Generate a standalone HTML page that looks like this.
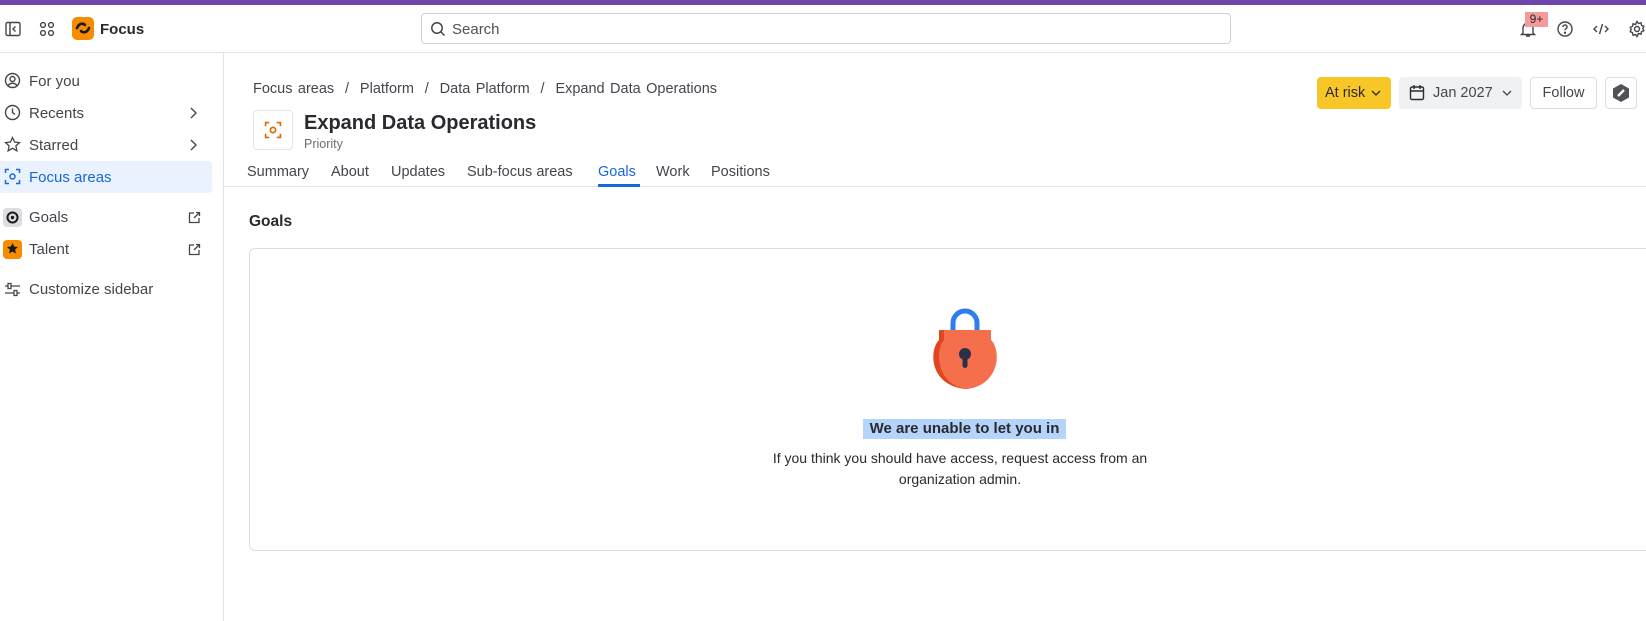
<!DOCTYPE html>
<html><head><meta charset="utf-8"><style>
*{box-sizing:border-box;margin:0;padding:0}
body{width:1646px;height:621px;overflow:hidden;background:#fff;font-family:"Liberation Sans",sans-serif;color:#292a2e;position:relative;line-height:1.42}
.a{position:absolute;white-space:nowrap}
svg{display:block}
.si{position:absolute;left:6px;font-size:15px;color:#44464d}
</style></head><body>
<div class="a" style="left:0;top:0;width:1646px;height:5px;background:#6e45a8"></div>
<div class="a" style="left:0;top:52px;width:1646px;height:1px;background:#e2e3e6"></div>
<div class="a" style="left:223px;top:53px;width:1px;height:568px;background:#e2e3e6"></div>
<svg class="a" style="left:5px;top:21px" width="16" height="16" viewBox="0 0 16 16" fill="none" stroke="#44464d" stroke-width="1.4"><rect x="1" y="1.5" width="14" height="13" rx="1.5"/><path d="M5 1.5v13M10.5 5.5L8 8l2.5 2.5"/></svg>
<svg class="a" style="left:39px;top:21px" width="16" height="16" viewBox="0 0 16 16" fill="none" stroke="#44464d" stroke-width="1.4"><circle cx="4" cy="4" r="2.4"/><circle cx="12" cy="4" r="2.4"/><circle cx="4" cy="12" r="2.4"/><circle cx="12" cy="12" r="2.4"/></svg>
<div class="a" style="left:72px;top:17px;width:22px;height:23px;border-radius:5px;background:#f78c00"></div>
<svg class="a" style="left:74px;top:19px" width="18" height="18" viewBox="0 0 18 18" fill="none" stroke="#1a1a1a" stroke-width="2.6" stroke-linecap="round"><path d="M3 9c2-5 6-5 8-3M15 9c-2 5-6 5-8 3"/></svg>
<div class="a" style="left:100px;top:19px;font-size:15px;font-weight:bold;color:#292a2e">Focus</div>
<div class="a" style="left:421px;top:13px;width:810px;height:31px;border:1px solid #cfd1d6;border-radius:4px"></div>
<svg class="a" style="left:430px;top:21px" width="16" height="16" viewBox="0 0 16 16" fill="none" stroke="#44464d" stroke-width="1.5"><circle cx="7" cy="7" r="5.2"/><path d="M11 11l3.5 3.5"/></svg>
<div class="a" style="left:452px;top:19px;font-size:15px;color:#505258">Search</div>
<svg class="a" style="left:1519px;top:20px" width="18" height="18" viewBox="0 0 18 18" fill="none" stroke="#44464d" stroke-width="1.4"><path d="M4 13V8a5 5 0 0110 0v5l1.5 1.5h-13zM7 16h4"/></svg>
<div class="a" style="left:1525px;top:12px;width:23px;height:15px;background:#f59a9a;font-size:12px;text-align:center;line-height:15px;color:#292a2e">9+</div>
<svg class="a" style="left:1556px;top:20px" width="18" height="18" viewBox="0 0 18 18" fill="none" stroke="#44464d" stroke-width="1.4"><circle cx="9" cy="9" r="7"/><path d="M7 7a2 2 0 113 1.7c-.7.4-1 .8-1 1.6"/><circle cx="9" cy="12.8" r=".5" fill="#44464d"/></svg>
<svg class="a" style="left:1592px;top:20px" width="18" height="18" viewBox="0 0 18 18" fill="none" stroke="#44464d" stroke-width="1.4"><path d="M5 6L2 9l3 3M13 6l3 3-3 3M10.5 4l-3 10"/></svg>
<svg class="a" style="left:1628px;top:20px" width="18" height="18" viewBox="0 0 18 18" fill="none" stroke="#44464d" stroke-width="1.4"><circle cx="9" cy="9" r="2.5"/><path d="M9 1.5l1.5 2 2.5-.7.5 2.5 2.3 1-1 2.2 1 2.2-2.3 1-.5 2.5-2.5-.7L9 16.5l-1.5-2-2.5.7-.5-2.5-2.3-1 1-2.2-1-2.2 2.3-1 .5-2.5 2.5.7z"/></svg>
<div class="a" style="left:0;top:161px;width:212px;height:32px;background:#e9f2fe;border-radius:0 4px 4px 0"></div>
<svg class="a" style="left:4px;top:72px" width="17" height="17" viewBox="0 0 17 17" fill="none" stroke="#44464d" stroke-width="1.4"><circle cx="8.5" cy="8.5" r="7"/><circle cx="8.5" cy="7" r="2.5"/><path d="M4 13.5c2.5-3 6.5-3 9 0"/></svg>
<div class="si" style="left:29px;top:71px">For you</div>
<svg class="a" style="left:4px;top:104px" width="17" height="17" viewBox="0 0 17 17" fill="none" stroke="#44464d" stroke-width="1.4"><circle cx="8.5" cy="8.5" r="7"/><path d="M8.5 4.5v4l2.5 2"/></svg>
<div class="si" style="left:29px;top:103px">Recents</div>
<svg class="a" style="left:4px;top:136px" width="17" height="17" viewBox="0 0 17 17" fill="none" stroke="#44464d" stroke-width="1.3"><path d="M8.5 1.5l2.1 4.5 4.9.6-3.6 3.3 1 4.9-4.4-2.5-4.4 2.5 1-4.9L1.5 6.6l4.9-.6z"/></svg>
<div class="si" style="left:29px;top:135px">Starred</div>
<svg class="a" style="left:189px;top:107px" width="8" height="12" viewBox="0 0 8 12" fill="none" stroke="#44464d" stroke-width="1.4"><path d="M2 1l5 5-5 5"/></svg>
<svg class="a" style="left:189px;top:139px" width="8" height="12" viewBox="0 0 8 12" fill="none" stroke="#44464d" stroke-width="1.4"><path d="M2 1l5 5-5 5"/></svg>
<svg class="a" style="left:4px;top:168px" width="17" height="17" viewBox="0 0 17 17" fill="none" stroke="#1868db" stroke-width="1.5"><path d="M1.5 5V1.5H5M12 1.5h3.5V5M15.5 12v3.5H12M5 15.5H1.5V12"/><circle cx="8.5" cy="8.5" r="2.5"/></svg>
<div class="si" style="left:29px;top:167px;color:#1868db">Focus areas</div>
<div class="a" style="left:3px;top:208px;width:19px;height:19px;border-radius:4px;background:#dcdde0"></div>
<svg class="a" style="left:6px;top:211px" width="13" height="13" viewBox="0 0 13 13"><circle cx="6.5" cy="6.5" r="5" fill="none" stroke="#1a1a1a" stroke-width="2"/><circle cx="6.5" cy="6.5" r="1.7" fill="#1a1a1a"/></svg>
<div class="si" style="left:29px;top:207px">Goals</div>
<div class="a" style="left:3px;top:240px;width:19px;height:19px;border-radius:4px;background:#f78c00"></div>
<svg class="a" style="left:6px;top:242px" width="13" height="13" viewBox="0 0 13 13"><path d="M6.5 1l1.6 3.5 3.9.5-2.9 2.6.8 3.9-3.4-2-3.4 2 .8-3.9L1 5l3.9-.5z" fill="#1a1a1a"/></svg>
<div class="si" style="left:29px;top:239px">Talent</div>
<svg class="a" style="left:188px;top:211px" width="13" height="13" viewBox="0 0 13 13" fill="none" stroke="#44464d" stroke-width="1.3"><path d="M6 2H1.5v9.5H11V7M8 1.5h3.5V5M11.5 1.5L6 7"/></svg>
<svg class="a" style="left:188px;top:243px" width="13" height="13" viewBox="0 0 13 13" fill="none" stroke="#44464d" stroke-width="1.3"><path d="M6 2H1.5v9.5H11V7M8 1.5h3.5V5M11.5 1.5L6 7"/></svg>
<svg class="a" style="left:4px;top:281px" width="17" height="17" viewBox="0 0 17 17" fill="none" stroke="#44464d" stroke-width="1.3"><path d="M1 5h15M1 12h15"/><rect x="4" y="2.5" width="3" height="5" fill="#fff"/><rect x="10" y="9.5" width="3" height="5" fill="#fff"/></svg>
<div class="si" style="left:29px;top:279px">Customize sidebar</div>
<div class="a" style="left:253px;top:79px;font-size:14.5px;color:#44464d;word-spacing:1.4px">Focus areas &nbsp;/ &nbsp;Platform &nbsp;/ &nbsp;Data Platform &nbsp;/ &nbsp;Expand Data Operations</div>
<div class="a" style="left:253px;top:110px;width:40px;height:40px;border:1px solid #e2e3e6;border-radius:4px"></div>
<svg class="a" style="left:264px;top:121px" width="18" height="18" viewBox="0 0 17 17" fill="none" stroke="#e06c00" stroke-width="1.6"><path d="M1.5 5V1.5H5M12 1.5h3.5V5M15.5 12v3.5H12M5 15.5H1.5V12"/><circle cx="8.5" cy="8.5" r="2.5"/></svg>
<div class="a" style="left:304px;top:109px;font-size:20px;font-weight:bold;color:#292a2e">Expand Data Operations</div>
<div class="a" style="left:304px;top:136px;font-size:12.5px;color:#6b6e76">Priority</div>
<div class="a" style="left:247px;top:162px;font-size:14.5px;color:#44464d">Summary</div>
<div class="a" style="left:331px;top:162px;font-size:14.5px;color:#44464d">About</div>
<div class="a" style="left:391px;top:162px;font-size:14.5px;color:#44464d">Updates</div>
<div class="a" style="left:467px;top:162px;font-size:14.5px;color:#44464d">Sub-focus areas</div>
<div class="a" style="left:598px;top:162px;font-size:14.5px;color:#1868db">Goals</div>
<div class="a" style="left:656px;top:162px;font-size:14.5px;color:#44464d">Work</div>
<div class="a" style="left:711px;top:162px;font-size:14.5px;color:#44464d">Positions</div>
<div class="a" style="left:224px;top:186px;width:1422px;height:1px;background:#e2e3e6"></div>
<div class="a" style="left:598px;top:184px;width:42px;height:3px;background:#1868db"></div>
<div class="a" style="left:1317px;top:77px;width:74px;height:32px;background:#f8c626;border-radius:4px"></div>
<div class="a" style="left:1325px;top:83px;font-size:14.5px;color:#292a2e">At risk</div>
<svg class="a" style="left:1371px;top:90px" width="10" height="7" viewBox="0 0 10 7" fill="none" stroke="#292a2e" stroke-width="1.3"><path d="M1 1l4 4 4-4"/></svg>
<div class="a" style="left:1399px;top:77px;width:123px;height:32px;background:#f0f1f2;border-radius:4px"></div>
<svg class="a" style="left:1409px;top:84px" width="16" height="17" viewBox="0 0 16 17" fill="none" stroke="#292a2e" stroke-width="1.4"><rect x="1.5" y="3" width="13" height="12.5" rx="1.5"/><path d="M1.5 7h13M5 1v4M11 1v4"/></svg>
<div class="a" style="left:1433px;top:83px;font-size:14.5px;color:#44464d">Jan 2027</div>
<svg class="a" style="left:1502px;top:90px" width="10" height="7" viewBox="0 0 10 7" fill="none" stroke="#44464d" stroke-width="1.3"><path d="M1 1l4 4 4-4"/></svg>
<div class="a" style="left:1530px;top:77px;width:67px;height:32px;border:1px solid #dcdde0;border-radius:4px;font-size:14.5px;text-align:center;line-height:30px;color:#44464d">Follow</div>
<div class="a" style="left:1605px;top:77px;width:32px;height:32px;border:1px solid #dcdde0;border-radius:4px"></div>
<svg class="a" style="left:1611px;top:83px" width="20" height="20" viewBox="0 0 20 20"><path d="M10 1l8 4.5v9L10 19 2 14.5v-9z" fill="#505258"/><path d="M7 13l6-6" stroke="#fff" stroke-width="2.4"/></svg>
<div class="a" style="left:249px;top:211px;font-size:15.5px;font-weight:bold;color:#292a2e">Goals</div>
<div class="a" style="left:249px;top:248px;width:1420px;height:303px;border:1px solid #dcdde0;border-radius:6px"></div>
<svg class="a" style="left:930px;top:305px" width="70" height="88" viewBox="0 0 70 88">
<path d="M23 30V18a12 12 0 0124 0v12" fill="none" stroke="#2f7df0" stroke-width="5"/>
<path d="M9 25h52v10c10 10 10 45-26 49C-1 80-1 45 9 35z" fill="#e2461f"/>
<path d="M14 25h47v10c10 10 9 45-24 49C6 80 5 45 14 35z" fill="#f56f4c"/>
<circle cx="35" cy="49" r="6" fill="#293048"/><rect x="32.5" y="49" width="5" height="14" rx="2.5" fill="#293048"/>
</svg>
<div class="a" style="left:863px;top:419px;width:203px;height:20px;background:#b4d4fa"></div>
<div class="a" style="left:863px;top:418px;width:203px;text-align:center;font-size:15px;font-weight:bold;color:#292a2e">We are unable to let you in</div>
<div class="a" style="left:740px;top:448px;width:440px;text-align:center;font-size:14px;line-height:21px;color:#292a2e;white-space:normal">If you think you should have access, request access from an organization admin.</div>
</body></html>
